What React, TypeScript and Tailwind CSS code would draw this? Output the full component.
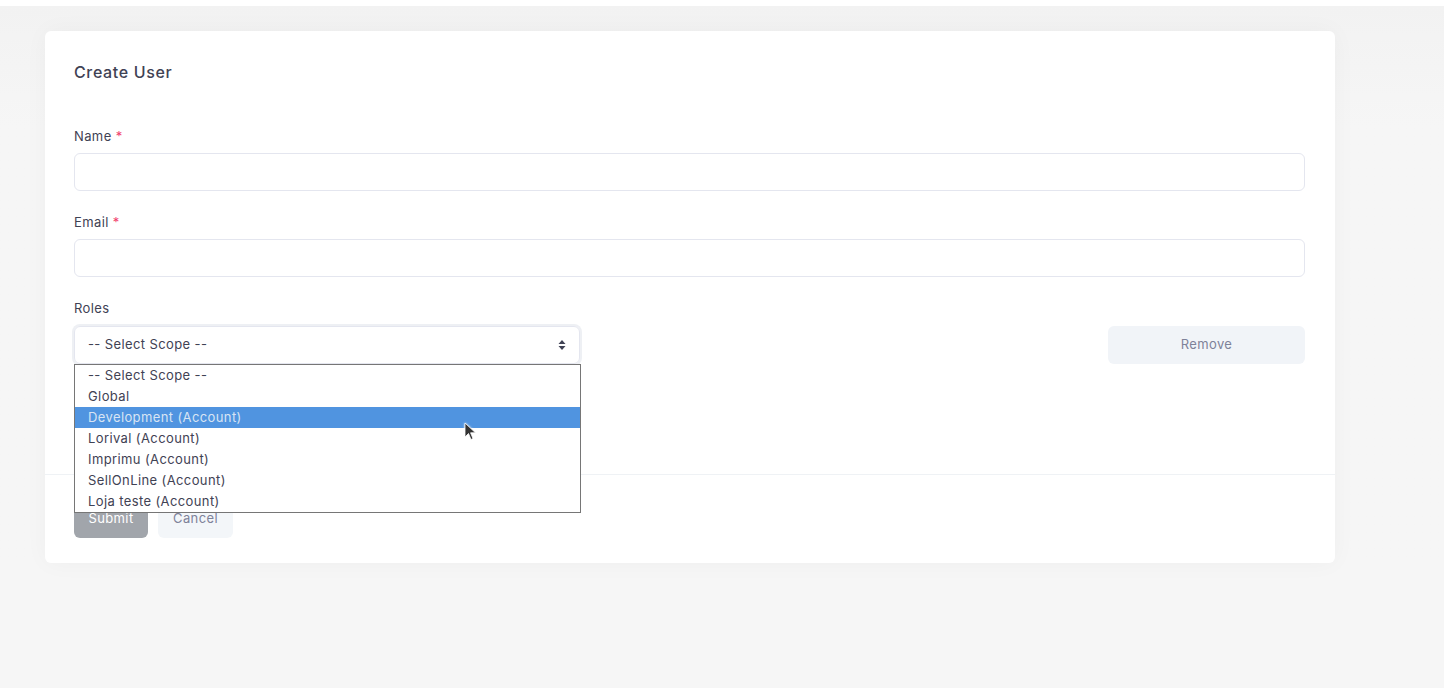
const scopes = [
  "-- Select Scope --",
  "Global",
  "Development (Account)",
  "Lorival (Account)",
  "Imprimu (Account)",
  "SellOnLine (Account)",
  "Loja teste (Account)",
];

function Field({ label, required }: { label: string; required?: boolean }) {
  return (
    <div className="mb-[22px]">
      <label className="block text-[13px] leading-[18px] tracking-[0.03em] text-[#3f4254] mb-2">
        {label} {required && <span className="text-[#f1416c]">*</span>}
      </label>
      <input className="block w-full h-[38px] rounded-md border border-[#e4e6ef] bg-white px-3 outline-none" />
    </div>
  );
}

function SortIcon() {
  return (
    <svg width="8" height="12" viewBox="0 0 8 12" className="text-[#3f4254]">
      <path d="M4 1 L7.5 5 H0.5 Z" fill="currentColor" />
      <path d="M4 11 L7.5 7 H0.5 Z" fill="currentColor" />
    </svg>
  );
}

function Cursor() {
  return (
    <svg width="14" height="20" viewBox="0 0 14 20" className="absolute left-[464px] top-[422px] drop-shadow-[0_0_1px_rgba(255,255,255,0.9)]">
      <path d="M1 1 L1 15 L4.5 11.5 L7 17.5 L9 16.6 L6.6 10.8 L11.5 10.8 Z" fill="#333" stroke="#fff" strokeWidth="0.8" />
    </svg>
  );
}

export default function App() {
  return (
    <div className="relative min-h-[688px] bg-[#f6f6f6] font-['Inter',sans-serif]">
      <div className="h-[6px] bg-white" />
      <div className="pl-[45px] pt-[25px] pr-[109px] bg-gradient-to-b from-[#f2f2f2] to-[#f6f6f6] to-[120px]">
        <div className="bg-white rounded-md shadow-[0_0_24px_rgba(0,0,0,0.035)]">
          <div className="pl-[29px] pr-[30px] pt-[30px] pb-[110px]">
            <h1 className="text-[16px] leading-[22px] font-medium tracking-[0.04em] text-[#3f4254] mb-[44px]">Create User</h1>
            <Field label="Name" required />
            <Field label="Email" required />
            <label className="block text-[13px] leading-[18px] tracking-[0.03em] text-[#3f4254] mb-[9px]">Roles</label>
            <div className="flex items-center justify-between">
              <div className="w-[506px] h-[38px] flex items-center justify-between rounded-md border border-[#e4e6ef] ring-2 ring-[#eef0f4] px-[13px] text-[13px] tracking-[0.03em] text-[#3f4254]">
                <span>-- Select Scope --</span>
                <SortIcon />
              </div>
              <button className="w-[197px] h-[38px] rounded-md bg-[#f1f4f8] text-[13px] tracking-[0.03em] text-[#7e8299]">Remove</button>
            </div>
          </div>
          <div className="border-t border-[#eff2f5] px-[29px] pt-[25px] pb-[25px] flex gap-[10px]">
            <button className="w-[74px] h-[38px] rounded-md bg-[#a1a5ab] text-[13px] tracking-[0.03em] text-white">Submit</button>
            <button className="w-[75px] h-[38px] rounded-md bg-[#f3f6f9] text-[13px] tracking-[0.03em] text-[#7e8299]">Cancel</button>
          </div>
        </div>
      </div>

      <ul className="absolute left-[74px] top-[364px] w-[507px] border border-[#767676] bg-white text-[13px] tracking-[0.03em] text-[#3f4254]">
        {scopes.map((s, i) => (
          <li
            key={s}
            className={`h-[21px] leading-[21px] px-[13px] ${i === 2 ? "bg-[#5094e0] text-[#d8e4f4]" : ""}`}
          >
            {s}
          </li>
        ))}
      </ul>
      <Cursor />
    </div>
  );
}
